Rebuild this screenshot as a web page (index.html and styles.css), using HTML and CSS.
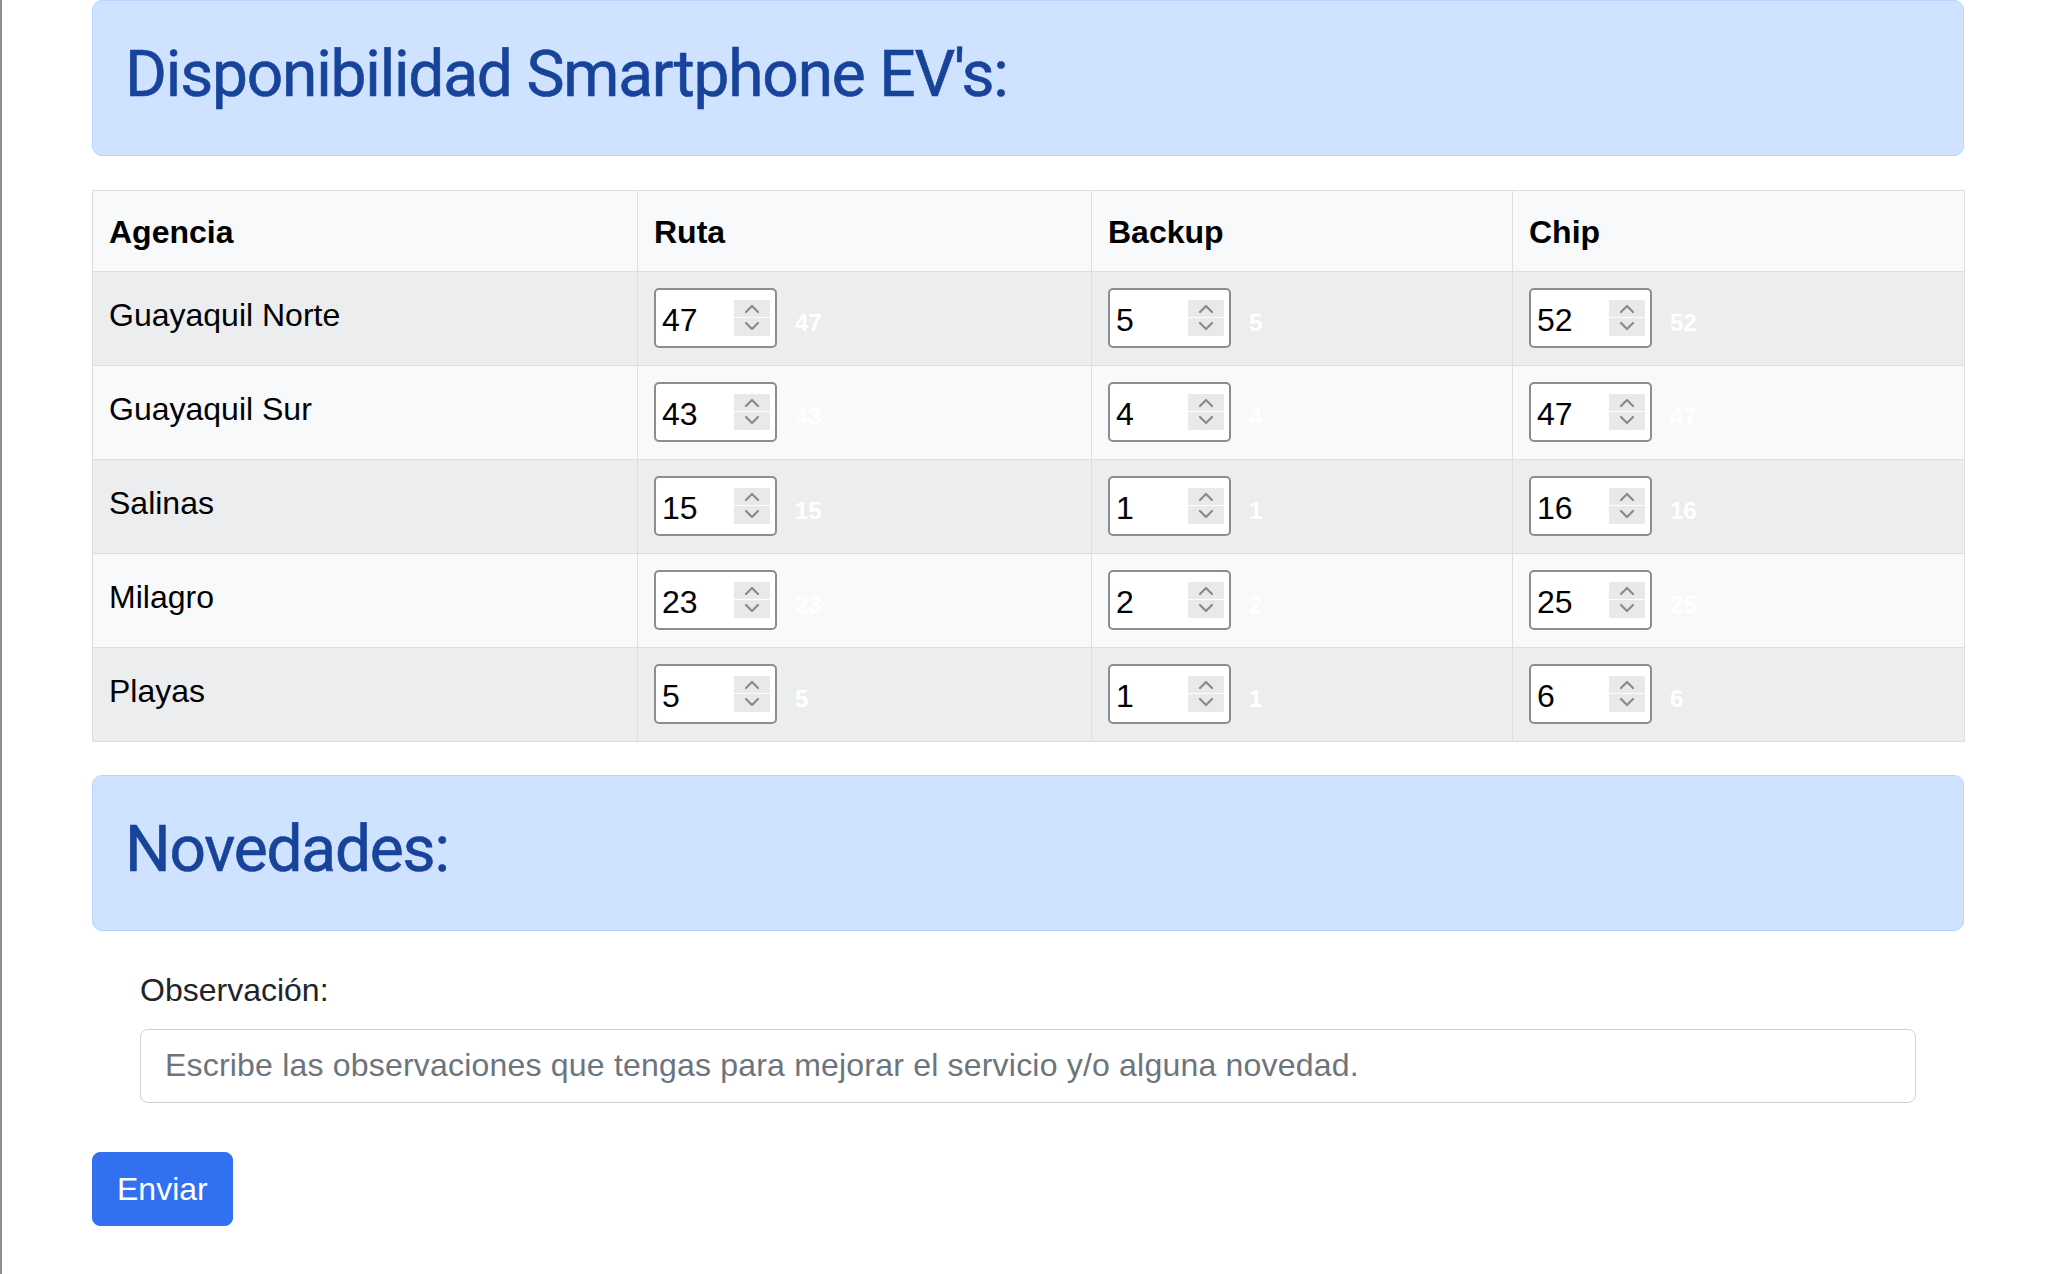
FILE: index.html
```html
<!DOCTYPE html>
<html lang="es">
<head>
<meta charset="utf-8">
<title>Disponibilidad Smartphone EV's</title>
<link rel="stylesheet" href="styles.css">
</head>
<body>
<div class="container">
  <div class="alert"><h2>Disponibilidad Smartphone EV's:</h2></div>

  <table class="tbl">
    <colgroup>
      <col class="c1"><col class="c2"><col class="c3"><col class="c4">
    </colgroup>
    <thead>
      <tr><th>Agencia</th><th>Ruta</th><th>Backup</th><th>Chip</th></tr>
    </thead>
    <tbody>
      <tr>
        <td class="name">Guayaquil Norte</td>
        <td><span class="num"><span class="val">47</span><svg class="spin" viewBox="0 0 36 36" width="36" height="36"><rect width="36" height="36" fill="#e9e9e9"/><line x1="0" y1="17.5" x2="36" y2="17.5" stroke="#fff" stroke-width="1"/><polyline points="12,12 18,6 24,12" fill="none" stroke="#8a8a8a" stroke-width="2.2" stroke-linecap="round" stroke-linejoin="round"/><polyline points="12,23 18,29 24,23" fill="none" stroke="#8a8a8a" stroke-width="2.2" stroke-linecap="round" stroke-linejoin="round"/></svg></span><span class="badge">47</span></td>
        <td><span class="num"><span class="val">5</span><svg class="spin" viewBox="0 0 36 36" width="36" height="36"><rect width="36" height="36" fill="#e9e9e9"/><line x1="0" y1="17.5" x2="36" y2="17.5" stroke="#fff" stroke-width="1"/><polyline points="12,12 18,6 24,12" fill="none" stroke="#8a8a8a" stroke-width="2.2" stroke-linecap="round" stroke-linejoin="round"/><polyline points="12,23 18,29 24,23" fill="none" stroke="#8a8a8a" stroke-width="2.2" stroke-linecap="round" stroke-linejoin="round"/></svg></span><span class="badge">5</span></td>
        <td><span class="num"><span class="val">52</span><svg class="spin" viewBox="0 0 36 36" width="36" height="36"><rect width="36" height="36" fill="#e9e9e9"/><line x1="0" y1="17.5" x2="36" y2="17.5" stroke="#fff" stroke-width="1"/><polyline points="12,12 18,6 24,12" fill="none" stroke="#8a8a8a" stroke-width="2.2" stroke-linecap="round" stroke-linejoin="round"/><polyline points="12,23 18,29 24,23" fill="none" stroke="#8a8a8a" stroke-width="2.2" stroke-linecap="round" stroke-linejoin="round"/></svg></span><span class="badge">52</span></td>
      </tr>
      <tr>
        <td class="name">Guayaquil Sur</td>
        <td><span class="num"><span class="val">43</span><svg class="spin" viewBox="0 0 36 36" width="36" height="36"><rect width="36" height="36" fill="#e9e9e9"/><line x1="0" y1="17.5" x2="36" y2="17.5" stroke="#fff" stroke-width="1"/><polyline points="12,12 18,6 24,12" fill="none" stroke="#8a8a8a" stroke-width="2.2" stroke-linecap="round" stroke-linejoin="round"/><polyline points="12,23 18,29 24,23" fill="none" stroke="#8a8a8a" stroke-width="2.2" stroke-linecap="round" stroke-linejoin="round"/></svg></span><span class="badge">43</span></td>
        <td><span class="num"><span class="val">4</span><svg class="spin" viewBox="0 0 36 36" width="36" height="36"><rect width="36" height="36" fill="#e9e9e9"/><line x1="0" y1="17.5" x2="36" y2="17.5" stroke="#fff" stroke-width="1"/><polyline points="12,12 18,6 24,12" fill="none" stroke="#8a8a8a" stroke-width="2.2" stroke-linecap="round" stroke-linejoin="round"/><polyline points="12,23 18,29 24,23" fill="none" stroke="#8a8a8a" stroke-width="2.2" stroke-linecap="round" stroke-linejoin="round"/></svg></span><span class="badge">4</span></td>
        <td><span class="num"><span class="val">47</span><svg class="spin" viewBox="0 0 36 36" width="36" height="36"><rect width="36" height="36" fill="#e9e9e9"/><line x1="0" y1="17.5" x2="36" y2="17.5" stroke="#fff" stroke-width="1"/><polyline points="12,12 18,6 24,12" fill="none" stroke="#8a8a8a" stroke-width="2.2" stroke-linecap="round" stroke-linejoin="round"/><polyline points="12,23 18,29 24,23" fill="none" stroke="#8a8a8a" stroke-width="2.2" stroke-linecap="round" stroke-linejoin="round"/></svg></span><span class="badge">47</span></td>
      </tr>
      <tr>
        <td class="name">Salinas</td>
        <td><span class="num"><span class="val">15</span><svg class="spin" viewBox="0 0 36 36" width="36" height="36"><rect width="36" height="36" fill="#e9e9e9"/><line x1="0" y1="17.5" x2="36" y2="17.5" stroke="#fff" stroke-width="1"/><polyline points="12,12 18,6 24,12" fill="none" stroke="#8a8a8a" stroke-width="2.2" stroke-linecap="round" stroke-linejoin="round"/><polyline points="12,23 18,29 24,23" fill="none" stroke="#8a8a8a" stroke-width="2.2" stroke-linecap="round" stroke-linejoin="round"/></svg></span><span class="badge">15</span></td>
        <td><span class="num"><span class="val">1</span><svg class="spin" viewBox="0 0 36 36" width="36" height="36"><rect width="36" height="36" fill="#e9e9e9"/><line x1="0" y1="17.5" x2="36" y2="17.5" stroke="#fff" stroke-width="1"/><polyline points="12,12 18,6 24,12" fill="none" stroke="#8a8a8a" stroke-width="2.2" stroke-linecap="round" stroke-linejoin="round"/><polyline points="12,23 18,29 24,23" fill="none" stroke="#8a8a8a" stroke-width="2.2" stroke-linecap="round" stroke-linejoin="round"/></svg></span><span class="badge">1</span></td>
        <td><span class="num"><span class="val">16</span><svg class="spin" viewBox="0 0 36 36" width="36" height="36"><rect width="36" height="36" fill="#e9e9e9"/><line x1="0" y1="17.5" x2="36" y2="17.5" stroke="#fff" stroke-width="1"/><polyline points="12,12 18,6 24,12" fill="none" stroke="#8a8a8a" stroke-width="2.2" stroke-linecap="round" stroke-linejoin="round"/><polyline points="12,23 18,29 24,23" fill="none" stroke="#8a8a8a" stroke-width="2.2" stroke-linecap="round" stroke-linejoin="round"/></svg></span><span class="badge">16</span></td>
      </tr>
      <tr>
        <td class="name">Milagro</td>
        <td><span class="num"><span class="val">23</span><svg class="spin" viewBox="0 0 36 36" width="36" height="36"><rect width="36" height="36" fill="#e9e9e9"/><line x1="0" y1="17.5" x2="36" y2="17.5" stroke="#fff" stroke-width="1"/><polyline points="12,12 18,6 24,12" fill="none" stroke="#8a8a8a" stroke-width="2.2" stroke-linecap="round" stroke-linejoin="round"/><polyline points="12,23 18,29 24,23" fill="none" stroke="#8a8a8a" stroke-width="2.2" stroke-linecap="round" stroke-linejoin="round"/></svg></span><span class="badge">23</span></td>
        <td><span class="num"><span class="val">2</span><svg class="spin" viewBox="0 0 36 36" width="36" height="36"><rect width="36" height="36" fill="#e9e9e9"/><line x1="0" y1="17.5" x2="36" y2="17.5" stroke="#fff" stroke-width="1"/><polyline points="12,12 18,6 24,12" fill="none" stroke="#8a8a8a" stroke-width="2.2" stroke-linecap="round" stroke-linejoin="round"/><polyline points="12,23 18,29 24,23" fill="none" stroke="#8a8a8a" stroke-width="2.2" stroke-linecap="round" stroke-linejoin="round"/></svg></span><span class="badge">2</span></td>
        <td><span class="num"><span class="val">25</span><svg class="spin" viewBox="0 0 36 36" width="36" height="36"><rect width="36" height="36" fill="#e9e9e9"/><line x1="0" y1="17.5" x2="36" y2="17.5" stroke="#fff" stroke-width="1"/><polyline points="12,12 18,6 24,12" fill="none" stroke="#8a8a8a" stroke-width="2.2" stroke-linecap="round" stroke-linejoin="round"/><polyline points="12,23 18,29 24,23" fill="none" stroke="#8a8a8a" stroke-width="2.2" stroke-linecap="round" stroke-linejoin="round"/></svg></span><span class="badge">25</span></td>
      </tr>
      <tr>
        <td class="name">Playas</td>
        <td><span class="num"><span class="val">5</span><svg class="spin" viewBox="0 0 36 36" width="36" height="36"><rect width="36" height="36" fill="#e9e9e9"/><line x1="0" y1="17.5" x2="36" y2="17.5" stroke="#fff" stroke-width="1"/><polyline points="12,12 18,6 24,12" fill="none" stroke="#8a8a8a" stroke-width="2.2" stroke-linecap="round" stroke-linejoin="round"/><polyline points="12,23 18,29 24,23" fill="none" stroke="#8a8a8a" stroke-width="2.2" stroke-linecap="round" stroke-linejoin="round"/></svg></span><span class="badge">5</span></td>
        <td><span class="num"><span class="val">1</span><svg class="spin" viewBox="0 0 36 36" width="36" height="36"><rect width="36" height="36" fill="#e9e9e9"/><line x1="0" y1="17.5" x2="36" y2="17.5" stroke="#fff" stroke-width="1"/><polyline points="12,12 18,6 24,12" fill="none" stroke="#8a8a8a" stroke-width="2.2" stroke-linecap="round" stroke-linejoin="round"/><polyline points="12,23 18,29 24,23" fill="none" stroke="#8a8a8a" stroke-width="2.2" stroke-linecap="round" stroke-linejoin="round"/></svg></span><span class="badge">1</span></td>
        <td><span class="num"><span class="val">6</span><svg class="spin" viewBox="0 0 36 36" width="36" height="36"><rect width="36" height="36" fill="#e9e9e9"/><line x1="0" y1="17.5" x2="36" y2="17.5" stroke="#fff" stroke-width="1"/><polyline points="12,12 18,6 24,12" fill="none" stroke="#8a8a8a" stroke-width="2.2" stroke-linecap="round" stroke-linejoin="round"/><polyline points="12,23 18,29 24,23" fill="none" stroke="#8a8a8a" stroke-width="2.2" stroke-linecap="round" stroke-linejoin="round"/></svg></span><span class="badge">6</span></td>
      </tr>
    </tbody>
  </table>

  <div class="alert alert-second"><h2>Novedades:</h2></div>

  <div class="obs">
    <label class="obs-label" for="obs">Observación:</label>
    <input class="obs-input" id="obs" type="text" placeholder="Escribe las observaciones que tengas para mejorar el servicio y/o alguna novedad.">
  </div>

  <button class="btn" type="button">Enviar</button>
</div>
</body>
</html>
```

FILE: styles.css
```css
html, body {
  margin: 0;
  padding: 0;
}

body {
  border-left: 2px solid #8e8e8e;
  min-height: 100vh;
  box-sizing: border-box;
  background: #ffffff;
  color: #212529;
  font-family: "Liberation Sans", Arial, sans-serif;
  font-size: 32px;
  line-height: 1.5;
}

.container {
  width: 1872px;
  margin-left: 90px;
}

.alert {
  background: #cfe2ff;
  border: 1px solid #b6d4fe;
  border-radius: 10px;
  padding: 36px 32px 25px;
  color: #17439a;
}

.alert h2 {
  margin: 0 0 16px;
  font-family: Roboto, "Liberation Sans", Arial, sans-serif;
  font-size: 64px;
  font-weight: 400;
  line-height: 1.2;
  letter-spacing: -1.2px;
  -webkit-text-stroke: 0.6px #17439a;
}

.alert-second {
  margin-top: 33px;
}

.tbl {
  margin-top: 34px;
  width: 1872px;
  border-collapse: collapse;
  table-layout: fixed;
  color: #000;
}

.c1 { width: 545px; }
.c2 { width: 454px; }
.c3 { width: 421px; }
.c4 { width: 452px; }

.tbl th,
.tbl td {
  border: 1px solid #dcdee0;
  padding: 16px;
  text-align: left;
  vertical-align: top;
}

.tbl td {
  padding-bottom: 17px;
}

.tbl td.name {
  padding-top: 19px;
  padding-bottom: 14px;
}

.tbl th {
  padding-top: 17px;
  padding-bottom: 15px;
  font-weight: bold;
}

.tbl thead tr {
  background: #f8f9fa;
}

.tbl tbody tr:nth-child(odd) {
  background: #ecedee;
}

.tbl tbody tr:nth-child(even) {
  background: #f8f9fa;
}

.num {
  display: inline-flex;
  align-items: center;
  justify-content: space-between;
  box-sizing: border-box;
  width: 123px;
  height: 60px;
  padding: 0 5px 0 6px;
  border: 2px solid #8d8d8d;
  border-radius: 5px;
  background: #ffffff;
  color: #000;
  vertical-align: baseline;
}

.val {
  line-height: 36px;
  padding-top: 4px;
}

.spin {
  display: block;
  flex: none;
}

.badge {
  margin-left: 18px;
  font-size: 24px;
  font-weight: bold;
  color: #ffffff;
}

.obs {
  padding: 35px 48px 0;
}

.obs-label {
  display: block;
  margin-bottom: 15px;
  line-height: 48px;
  color: #212529;
}

.obs-input {
  display: block;
  box-sizing: border-box;
  width: 100%;
  height: 74px;
  margin: 0;
  padding: 12px 24px;
  border: 1px solid #ced1d5;
  border-radius: 8px;
  background: #fff;
  color: #212529;
  font-family: "Liberation Sans", Arial, sans-serif;
  font-size: 32px;
  line-height: 48px;
  letter-spacing: 0.2px;
  outline: none;
}

.obs-input::placeholder {
  color: #6c757d;
  opacity: 1;
}

.btn {
  display: inline-block;
  margin-top: 49px;
  padding: 12px 24px;
  border: 1px solid #3170ef;
  border-radius: 8px;
  background: #3170ef;
  color: #ffffff;
  font-family: "Liberation Sans", Arial, sans-serif;
  font-size: 32px;
  line-height: 48px;
  cursor: pointer;
}
```
